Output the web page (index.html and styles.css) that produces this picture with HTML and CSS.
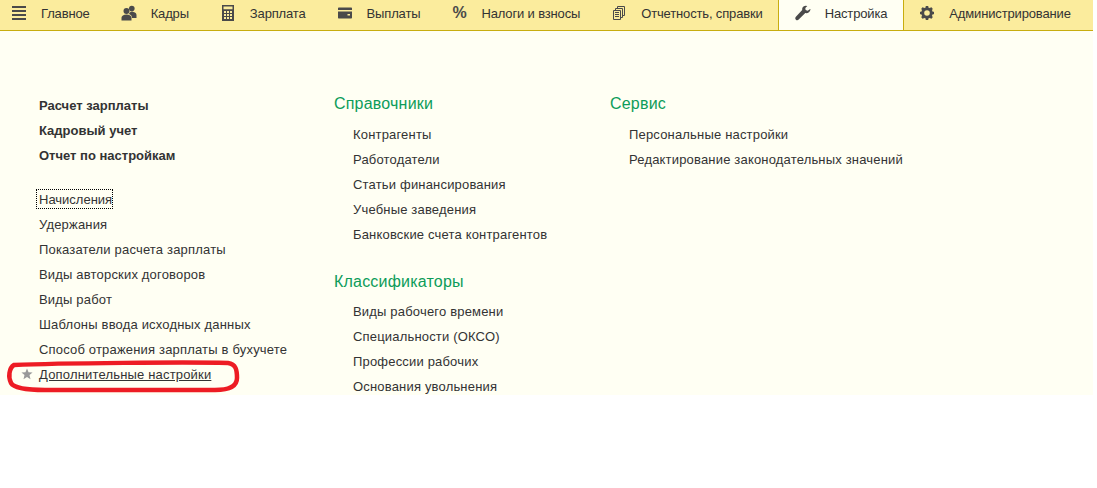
FILE: index.html
```html
<!DOCTYPE html>
<html lang="ru">
<head>
    <meta charset="UTF-8">
    <title>Настройка</title>
    <link rel="stylesheet" href="styles.css">
</head>
<body>
    <div class="panel">
        <nav class="tabs">
            <a class="tab first">
                <svg class="icon" viewBox="0 0 16 16"><path d="M1 1h14v2H1zM1 5h14v2H1zM1 9h14v2H1zM1 13h14v2H1z"/></svg>
                Главное
            </a>
            <a class="tab">
                <svg class="icon" viewBox="0 0 16 16"><circle cx="10.8" cy="3.6" r="2.8"/><path d="M8 9c.4-1.600 1.500-2.300 2.800-2.300 2.200 0 4.700 1 4.700 3.300v3H11c0-2-1-3.200-3-4z"/><circle cx="5.500" cy="6" r="3"/><path d="M.5 15.500v-2.700c0-2 2-3.300 5-3.300s5 1.300 5 3.300v2.700z"/></svg>
                Кадры
            </a>
            <a class="tab">
                <svg class="icon" viewBox="0 0 16 16"><path fill-rule="evenodd" d="M2 0h12v16H2zM3.500 1.500v2.800h9V1.500zM4 6v2h2V6zM7 6v2h2V6zM10 6v2h2V6zM4 9v2h2V9zM7 9v2h2V9zM10 9v2h2V9zM4 12v2h2v-2zM7 12v2h2v-2zM10 12v2h2v-2z"/></svg>
                Зарплата
            </a>
            <a class="tab">
                <svg class="icon" viewBox="0 0 16 16"><path fill-rule="evenodd" d="M2 2.500h12c.6 0 1 .4 1 1v9c0 .6-.4 1-1 1H2c-.6 0-1-.4-1-1v-9c0-.6.4-1 1-1zM1 5v1.500h14V5zM10.500 9v1.500H13V9z"/></svg>
                Выплаты
            </a>
            <a class="tab">
                <span class="icon percent">%</span>
                Налоги и взносы
            </a>
            <a class="tab">
                <svg class="icon" viewBox="0 0 16 16"><path fill="none" stroke="#4a4a4a" d="M2.500 5.500h7v9h-7zM4 7.500h4M4 9.500h4M4 11.500h4M4.500 5V3.500h7v9H10M6.500 3V1.500h7v9H12"/></svg>
                Отчетность, справки
            </a>
            <a class="tab active">
                <svg class="icon" viewBox="0 0 16 16"><path d="M10.500.8c-2.200.2-3.700 2-3.300 4.200L.9 11.800c-.9 1-.8 2.200 0 2.900.8.700 1.900.8 2.800-.1l6.600-6.500c2.300.6 4.700-1 5.200-3.600l-.3-.4-2.500 1.700-2.100-.7-.3-2 2-2z"/></svg>
                Настройка
            </a>
            <a class="tab">
                <svg class="icon" viewBox="0 0 16 16"><g fill="none" stroke="#4a4a4a"><circle cx="8" cy="8" r="4.300" stroke-width="3"/><path stroke-width="2.600" d="M8 1v2.500M8 12.500V15M1 8h2.500M12.500 8H15M3 3l1.800 1.800M11.200 11.200L13 13M3 13l1.800-1.800M11.200 4.800L13 3"/></g></svg>
                Администрирование
            </a>
        </nav>

        <div class="content">
            <div class="col col-main">
                <ul class="links strong">
                    <li>Расчет зарплаты</li>
                    <li>Кадровый учет</li>
                    <li>Отчет по настройкам</li>
                </ul>
                <ul class="links second">
                    <li><span class="focused">Начисления</span></li>
                    <li>Удержания</li>
                    <li>Показатели расчета зарплаты</li>
                    <li>Виды авторских договоров</li>
                    <li>Виды работ</li>
                    <li>Шаблоны ввода исходных данных</li>
                    <li>Способ отражения зарплаты в бухучете</li>
                    <li class="starred">
                        <svg class="star" viewBox="0 0 14 14"><polygon points="7,0.500 8.800,5 13.500,5.300 9.900,8.300 11.100,13 7,10.400 2.900,13 4.100,8.300 0.500,5.300 5.200,5"/></svg>
                        <u>Дополнительные настройки</u>
                    </li>
                </ul>
            </div>
            <div class="col col-refs">
                <h2>Справочники</h2>
                <ul class="links">
                    <li>Контрагенты</li>
                    <li>Работодатели</li>
                    <li>Статьи финансирования</li>
                    <li>Учебные заведения</li>
                    <li>Банковские счета контрагентов</li>
                </ul>
                <h2 class="next">Классификаторы</h2>
                <ul class="links">
                    <li>Виды рабочего времени</li>
                    <li>Специальности (ОКСО)</li>
                    <li>Профессии рабочих</li>
                    <li>Основания увольнения</li>
                </ul>
            </div>
            <div class="col col-service">
                <h2>Сервис</h2>
                <ul class="links">
                    <li>Персональные настройки</li>
                    <li>Редактирование законодательных значений</li>
                </ul>
            </div>
        </div>
    </div>

    <!-- red marker drawn over the screenshot -->
    <svg class="marker" width="250" height="50" viewBox="0 0 250 50">
        <path d="M14 15C60 13 190 12 228 13C236 14 237 20 237 28C237 36 230 40 215 40L45 40C25 40 14 38 11 33C8 27 9 18 14 15Z"/>
    </svg>
</body>
</html>
```

FILE: styles.css
```css
* {
    box-sizing: border-box;
}

body {
    margin: 0;
    background: #fff;
    color: #333;
    font-family: "Liberation Sans", Arial, sans-serif;
    font-size: 13px;
}

.panel {
    width: 1093px;
    height: 395px;
    overflow: hidden;
    background: #fffff3;
}

.tabs {
    display: flex;
    height: 31px;
    background: #fbec9d;
    border-bottom: 1px solid #c8ad0e;
}

.tab {
    display: flex;
    align-items: center;
    gap: 14px;
    padding: 0 15.5px 4px;
    letter-spacing: -0.15px;
    white-space: nowrap;
}

.tab.first {
    padding-left: 11px;
}

.tab.active {
    background: #fffff3;
    border-left: 1px solid #c8ad0e;
    border-right: 1px solid #c8ad0e;
}

.icon {
    flex: none;
    width: 16px;
    height: 16px;
    fill: #4a4a4a;
}

.percent {
    color: #4a4a4a;
    font-size: 16px;
    font-weight: bold;
    line-height: 16px;
    text-align: center;
}

.content {
    display: flex;
    padding-top: 62px;
}

.col-main {
    width: 334px;
    padding-left: 39px;
}

.col-refs {
    width: 276px;
}

.col h2 {
    margin: 0;
    color: #0d9c5a;
    font-size: 16px;
    font-weight: normal;
    letter-spacing: 0.2px;
    line-height: 22px;
}

.col h2.next {
    margin-top: 24px;
}

.links {
    margin: 0;
    padding: 0;
    letter-spacing: 0.18px;
    list-style: none;
}

.links li {
    height: 25px;
    line-height: 25px;
    white-space: nowrap;
}

.col-refs .links,
.col-service .links {
    margin-top: 7px;
    padding-left: 19px;
}

.col-refs h2.next + .links {
    margin-top: 6px;
}

.links.strong {
    font-weight: bold;
    letter-spacing: 0;
}

.second {
    margin-top: 19px;
}

.focused {
    padding: 2px 0 1px 2px;
    margin-left: -2px;
    letter-spacing: 0;
    outline: 1px dotted #000;
}

.starred {
    position: relative;
}

.star {
    position: absolute;
    left: -18px;
    top: 6px;
    width: 12px;
    height: 12px;
    fill: #999;
}

.marker {
    position: absolute;
    left: 0;
    top: 350px;
    fill: none;
    stroke: #ed1c24;
    stroke-width: 4.5;
}
```
